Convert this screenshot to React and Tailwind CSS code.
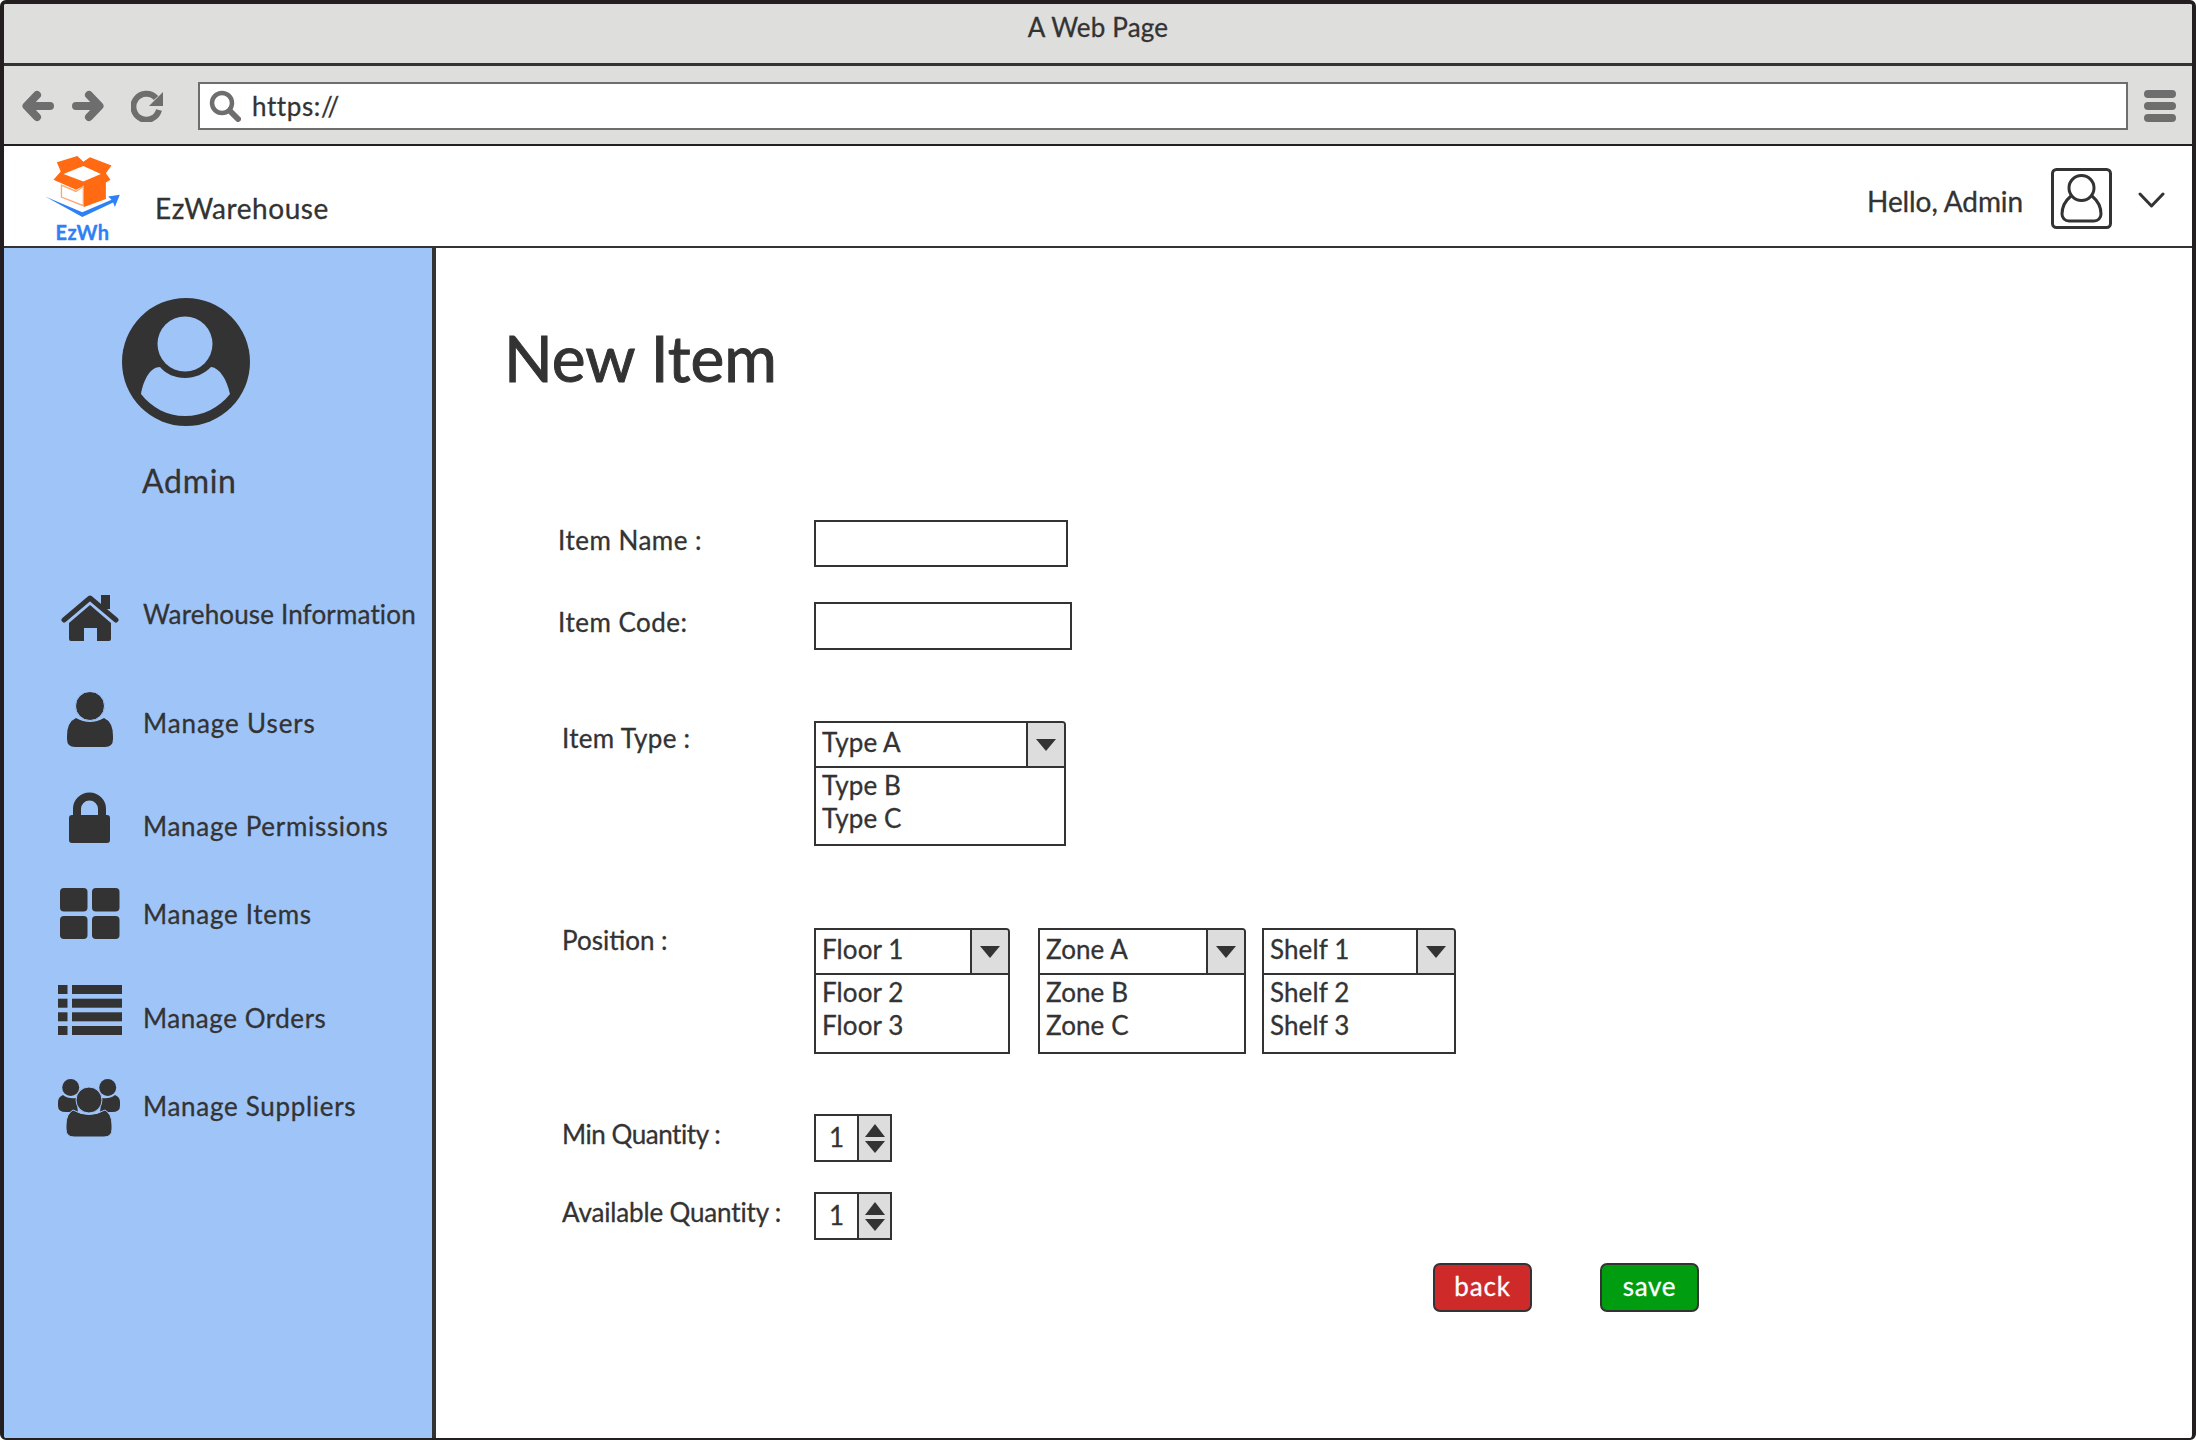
const D = "#333333";

function BrowserBack() {
  return (
    <svg width="32" height="32" viewBox="0 0 32 32" fill="none" stroke="#6e6e6e" strokeWidth="8" strokeLinecap="round" strokeLinejoin="round">
      <path d="M28 16H6M15 5L4.500 16L15 27" />
    </svg>
  );
}
function BrowserForward() {
  return (
    <svg width="32" height="32" viewBox="0 0 32 32" fill="none" stroke="#6e6e6e" strokeWidth="8" strokeLinecap="round" strokeLinejoin="round">
      <path d="M4 16H26M17 5L27.500 16L17 27" />
    </svg>
  );
}
function Reload() {
  return (
    <svg width="32" height="32" viewBox="0 0 32 32">
      <path d="M25 8A13 13 0 1 0 28 20" fill="none" stroke="#6e6e6e" strokeWidth="6" />
      <path d="M32 2V16H18Z" fill="#6e6e6e" />
    </svg>
  );
}
function SearchIcon() {
  return (
    <svg width="32" height="32" viewBox="0 0 32 32" fill="none" stroke="#6e6e6e" strokeLinecap="round">
      <circle cx="13" cy="13" r="10" strokeWidth="4.500" />
      <path d="M21 21L29 29" strokeWidth="6" />
    </svg>
  );
}
function Logo() {
  return (
    <svg width="75" height="63" viewBox="135 465 225 190" className="block">
      <polygon fill="#ff6a13" points="170,487 232,468 250,485 270,472 335,497 318,520 332,540 318,548 318,598 252,622 252,558 228,570 160,540 182,515" />
      <polygon fill="#ffffff" points="190,522 250,498 303,522 250,545" />
      <polygon fill="#ffffff" stroke="#ffa66e" strokeWidth="4" points="184,556 228,575 250,560 250,618 184,592" />
      <polygon fill="#2f80f5" points="135,590 247,638 335,600 325,590 360,585 345,622 340,608 247,652" />
    </svg>
  );
}
function HeaderAvatar() {
  return (
    <svg width="61" height="61" viewBox="0 0 61 61" fill="none" stroke={D} strokeWidth="3">
      <rect x="1.500" y="1.500" width="58" height="58" rx="4" />
      <circle cx="30.500" cy="20" r="12.500" />
      <path d="M20 28C14 33 11 38 11 46C11 50 14 53 18 53H43C47 53 50 50 50 46C50 38 47 33 41 28" />
    </svg>
  );
}
function Chevron() {
  return (
    <svg width="27" height="17" viewBox="0 0 27 17" fill="none" stroke={D} strokeWidth="3" strokeLinecap="round" strokeLinejoin="round">
      <path d="M2 2L13.500 14L25 2" />
    </svg>
  );
}
function HamburgerBar() {
  return <div className="h-[8px] w-[32px] rounded-full bg-[#6e6e6e]" />;
}
function SideAvatar() {
  return (
    <svg width="128" height="128" viewBox="0 0 128 128" className="block">
      <circle cx="64" cy="64" r="64" fill={D} />
      <circle cx="63" cy="46" r="27.500" fill="#9fc4f8" />
      <path d="M19 96C22 80 29 69 38 69C44 76 53 80 63 80C73 80 82 76 89 69C98 70 105 82 108 96C97 110 81 118 63 118C45 118 30 110 19 96Z" fill="#9fc4f8" />
    </svg>
  );
}
function HomeIcon() {
  return (
    <svg width="58" height="47" viewBox="0 0 58 47" className="block">
      <rect x="40" y="0" width="9" height="14" fill={D} />
      <path d="M3 25L29 3L55 25" fill="none" stroke={D} strokeWidth="5" strokeLinecap="round" strokeLinejoin="round" />
      <path d="M8 28L29 10L50 28V44Q50 46 48 46H36V33H23V46H10Q8 46 8 44Z" fill={D} />
    </svg>
  );
}
function UserIcon() {
  return (
    <svg width="46" height="56" viewBox="0 0 46 56" className="block">
      <path d="M9 26Q23 34 37 26Q46 30 46 44V47Q46 55 38 55H8Q0 55 0 47V44Q0 30 9 26Z" fill={D} />
      <circle cx="23" cy="14" r="14.500" fill={D} stroke="#9fc4f8" strokeWidth="1" />
    </svg>
  );
}
function LockIcon() {
  return (
    <svg width="41" height="51" viewBox="0 0 41 51" className="block">
      <path d="M8 26V17A12.500 12.500 0 0 1 33 17V26" fill="none" stroke={D} strokeWidth="8" />
      <rect x="0" y="23" width="41" height="28" rx="3" fill={D} />
    </svg>
  );
}
function ItemsIcon() {
  return (
    <svg width="60" height="51" viewBox="0 0 60 51" fill={D} className="block">
      <rect x="0" y="0" width="27.500" height="23.500" rx="4" />
      <rect x="32" y="0" width="27.500" height="23.500" rx="4" />
      <rect x="0" y="28" width="27.500" height="23" rx="4" />
      <rect x="32" y="28" width="27.500" height="23" rx="4" />
    </svg>
  );
}
function OrdersIcon() {
  return (
    <svg width="64" height="50" viewBox="0 0 64 50" fill={D} className="block">
      {[0, 13.7, 27.3, 41].map((y) => (
        <g key={y}>
          <rect x="0" y={y} width="9.500" height="9" />
          <rect x="14" y={y} width="50" height="9" />
        </g>
      ))}
    </svg>
  );
}
function SuppliersIcon() {
  return (
    <svg width="62" height="58" viewBox="0 0 62 58" className="block">
      <circle cx="12.700" cy="8.500" r="8.500" fill={D} />
      <circle cx="49.700" cy="8.500" r="8.500" fill={D} />
      <path d="M5 16Q10 20 18 19L20 33L8 33Q0 33 0 27V23Q0 18 5 16Z" fill={D} />
      <path d="M57 16Q52 20 44 19L42 33L54 33Q62 33 62 27V23Q62 18 57 16Z" fill={D} />
      <path d="M15 31Q31 40 47 31Q54 35 54 46V50Q54 58 46 58H16Q8 58 8 50V46Q8 35 15 31Z" fill={D} stroke="#9fc4f8" strokeWidth="1" />
      <circle cx="31" cy="21" r="13" fill={D} stroke="#9fc4f8" strokeWidth="1" />
    </svg>
  );
}
function TriDown() {
  return (
    <svg width="20" height="13" viewBox="0 0 20 13" className="block">
      <path d="M0 1H20L10 13Z" fill={D} />
    </svg>
  );
}
function TriUp() {
  return (
    <svg width="20" height="13" viewBox="0 0 20 13" className="block">
      <path d="M0 13H20L10 0Z" fill={D} />
    </svg>
  );
}

const navItems = [
  { label: "Warehouse Information", Icon: HomeIcon, row: "mt-[94px]", icon: "ml-[57px]", text: "mt-[3px] tracking-[0.15px]" },
  { label: "Manage Users", Icon: UserIcon, row: "mt-[50px]", icon: "ml-[63px]", text: "mt-[15px] tracking-[0.9px]" },
  { label: "Manage Permissions", Icon: LockIcon, row: "mt-[44px]", icon: "ml-[65px]", text: "mt-[18px] tracking-[0.7px]" },
  { label: "Manage Items", Icon: ItemsIcon, row: "mt-[45px]", icon: "ml-[56px]", text: "mt-[10px] tracking-[0.7px]" },
  { label: "Manage Orders", Icon: OrdersIcon, row: "mt-[46px]", icon: "ml-[54px]", text: "mt-[17px] tracking-[0.55px]" },
  { label: "Manage Suppliers", Icon: SuppliersIcon, row: "mt-[44px]", icon: "ml-[54px]", text: "mt-[11px] tracking-[0.7px]" },
];

function Select({ width, items, height, className }) {
  return (
    <div className={`flex flex-col rounded-tr-[4px] border-2 border-[#333333] ${height} ${width} ${className || ""}`}>
      <div className="flex h-[45px] border-b-2 border-[#333333]">
        <div className="flex-1 pl-[6px] pt-[3px] text-[26px] leading-[32px] tracking-[0.1px]">{items[0]}</div>
        <div className="flex w-[38px] items-center justify-center rounded-tr-[2px] border-l-2 border-[#333333] bg-[#dddddd]">
          <TriDown />
        </div>
      </div>
      <div className="pl-[6px] pt-[1px] text-[26px] leading-[33px] tracking-[0.1px]">
        <div>{items[1]}</div>
        <div>{items[2]}</div>
      </div>
    </div>
  );
}

function Spinner() {
  return (
    <div className="flex h-[48px] w-[78px] border-2 border-[#333333]">
      <div className="w-[41px] text-center text-[26px] leading-[42px]">1</div>
      <div className="flex flex-1 flex-col items-center justify-center gap-[3px] border-l-2 border-[#333333] bg-[#dddddd]">
        <TriUp />
        <TriDown />
      </div>
    </div>
  );
}

export default function App() {
  return (
    <div
      className="box-border flex h-[1440px] w-[2196px] flex-col overflow-hidden rounded-[6px] border-4 border-b-2 border-[#231f20] bg-white text-[#333333] [-webkit-text-stroke:0.3px]"
      style={{ fontFamily: "Lato, 'Noto Sans', sans-serif" }}
    >
      <div className="flex h-[62px] shrink-0 items-center justify-center border-b-[3px] border-[#333333] bg-[#dededc] pb-[14px] text-[26px] leading-[30px] tracking-[0.2px]">
        A Web Page
      </div>
      <div className="flex h-[80px] shrink-0 border-b-2 border-[#231f20] bg-[#dededc] pt-[16px]">
        <div className="ml-[18px] mt-[8px]"><BrowserBack /></div>
        <div className="ml-[18px] mt-[8px]"><BrowserForward /></div>
        <div className="ml-[27px] mt-[8px]"><Reload /></div>
        <div className="ml-[35px] flex h-[48px] w-[1930px] items-center border-2 border-[#6e6e6e] bg-white pl-[9px]">
          <SearchIcon />
          <span className="ml-[11px] text-[26px] leading-[32px] tracking-[0.6px]">https://</span>
        </div>
        <div className="ml-[16px] mt-[8px] flex flex-col gap-[4px]">
          <HamburgerBar />
          <HamburgerBar />
          <HamburgerBar />
        </div>
      </div>
      <div className="flex h-[102px] shrink-0 border-b-2 border-[#333333]">
        <div className="ml-[41px] flex w-[75px] flex-col items-center pt-[9px]">
          <Logo />
          <span className="mt-[3px] text-[20px] font-bold leading-[22px] tracking-[0.5px] text-[#2f80f5]">EzWh</span>
        </div>
        <div className="ml-[35px] mt-[44px] text-[28px] leading-[36px] tracking-[0.55px]">EzWarehouse</div>
        <div className="ml-auto mt-[37px] text-[28px] leading-[36px] tracking-[-0.1px]">Hello, Admin</div>
        <div className="ml-[28px] mt-[22px]"><HeaderAvatar /></div>
        <div className="ml-[26px] mr-[27px] mt-[46px]"><Chevron /></div>
      </div>
      <div className="flex min-h-0 flex-1">
        <aside className="w-[432px] shrink-0 border-r-4 border-[#333333] bg-[#9fc4f8]">
          <div className="ml-[118px] mt-[50px]"><SideAvatar /></div>
          <div className="ml-[138px] mt-[35px] text-[32px] leading-[40px] tracking-[0.7px]">Admin</div>
          {navItems.map(({ label, Icon, row, icon, text }) => (
            <div key={label} className={`flex ${row}`}>
              <div className="flex w-[139px] shrink-0">
                <div className={icon}><Icon /></div>
              </div>
              <div className={`text-[26px] leading-[32px] ${text}`}>{label}</div>
            </div>
          ))}
        </aside>
        <main className="flex-1 pl-[68px] pt-[75px]">
          <h1 className="text-[64px] font-normal leading-[70px] [-webkit-text-stroke:1px]">New Item</h1>
          <div className="ml-[54px]">
            <div className="mt-[127px] flex">
              <div className="mt-[4px] w-[256px] text-[26px] leading-[32px] tracking-[0.5px]">Item Name :</div>
              <div className="h-[47px] w-[254px] border-2 border-[#333333]" />
            </div>
            <div className="mt-[35px] flex">
              <div className="mt-[4px] w-[256px] text-[26px] leading-[32px] tracking-[0.5px]">Item Code:</div>
              <div className="h-[48px] w-[258px] border-2 border-[#333333]" />
            </div>
            <div className="mt-[71px] flex">
              <div className="ml-[4px] mt-[1px] w-[252px] text-[26px] leading-[32px] tracking-[0.3px]">Item Type :</div>
              <Select height="h-[125px]" width="w-[252px]" items={["Type A", "Type B", "Type C"]} />
            </div>
            <div className="mt-[82px] flex">
              <div className="ml-[4px] mt-[-4px] w-[252px] text-[26px] leading-[32px]">Position :</div>
              <Select height="h-[126px]" width="w-[196px]" items={["Floor 1", "Floor 2", "Floor 3"]} />
              <Select height="h-[126px]" width="w-[208px]" className="ml-[28px]" items={["Zone A", "Zone B", "Zone C"]} />
              <Select height="h-[126px]" width="w-[194px]" className="ml-[16px]" items={["Shelf 1", "Shelf 2", "Shelf 3"]} />
            </div>
            <div className="mt-[60px] flex">
              <div className="ml-[4px] mt-[4px] w-[252px] text-[26px] leading-[32px] tracking-[-0.45px]">Min Quantity :</div>
              <Spinner />
            </div>
            <div className="mt-[30px] flex">
              <div className="ml-[4px] mt-[4px] w-[252px] text-[26px] leading-[32px] tracking-[-0.15px]">Available Quantity :</div>
              <Spinner />
            </div>
            <div className="ml-[875px] mt-[23px] flex gap-[68px]">
              <div className="flex h-[49px] w-[99px] items-center justify-center rounded-[7px] border-2 border-[#333333] bg-[#cf2a2a] pb-[3px] text-[26px] leading-[30px] tracking-[0.8px] text-white">back</div>
              <div className="flex h-[49px] w-[99px] items-center justify-center rounded-[7px] border-2 border-[#333333] bg-[#009d10] pb-[3px] text-[26px] leading-[30px] tracking-[0.7px] text-white">save</div>
            </div>
          </div>
        </main>
      </div>
    </div>
  );
}
